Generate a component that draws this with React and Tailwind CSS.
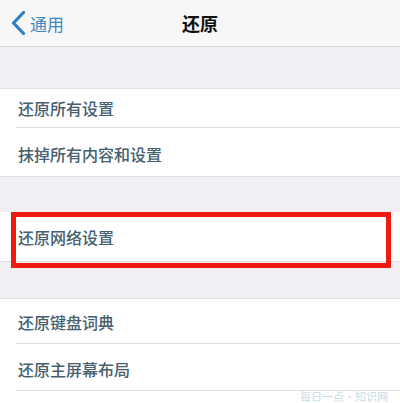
import React from "react";

const font = { fontFamily: '"Noto Sans CJK SC", "Noto Sans", sans-serif' };

function Row({ label, h, inset = true, last = false }) {
  return (
    <div className="bg-white">
      <div className={`flex items-center pl-[18px] ${h}`}>
        <span className="text-[16px] font-medium text-[#45606e] leading-none">{label}</span>
      </div>
      {!last && <div className={`h-px bg-[#dddde2] ${inset ? "ml-[16px]" : ""}`} />}
    </div>
  );
}

export default function App() {
  return (
    <div className="w-[400px] h-[403px] overflow-hidden bg-white" style={font}>
      {/* nav bar */}
      <div className="h-[47px] bg-[#f7f7f8] border-b border-[#d6d6da] flex items-center relative">
        <div className="flex items-center pl-[11px] gap-[4px]">
          <svg width="15" height="24" viewBox="0 0 15 24" fill="none">
            <path d="M12.5 1.5 L2.5 12 L12.5 22.5" stroke="#2f7fc0" strokeWidth="3.2" strokeLinecap="round" strokeLinejoin="round" />
          </svg>
          <span className="text-[17px] text-[#3e86bd] leading-none">通用</span>
        </div>
        <div className="absolute inset-x-0 top-0 h-full flex items-center justify-center pointer-events-none">
          <span className="text-[18px] font-bold text-[#111] leading-none">还原</span>
        </div>
      </div>

      <div className="h-[42px] bg-[#efeff4] border-b border-[#e2e2e6]" />

      <Row label="还原所有设置" h="h-[38px]" />
      <Row label="抹掉所有内容和设置" h="h-[48px] pt-[3px]" inset={false} />

      <div className="h-[35px] bg-[#efeff4]" />

      <div className="relative">
        <Row label="还原网络设置" h="h-[49px] pt-[1px]" inset={false} />
        <div className="absolute left-[11px] right-[9px] top-0 bottom-[-6px] border-[5px] border-[#ee1c10]" />
      </div>

      <div className="h-[37px] bg-[#efeff4] border-b border-[#e2e2e6]" />

      <Row label="还原键盘词典" h="h-[44px] pt-[1px]" />
      <Row label="还原主屏幕布局" h="h-[46px] pt-[3px]" />

      <div className="flex justify-end pr-[12px]">
        <span className="text-[11px] text-[#c9dce4] leading-none">每日一点·知识网</span>
      </div>
    </div>
  );
}
